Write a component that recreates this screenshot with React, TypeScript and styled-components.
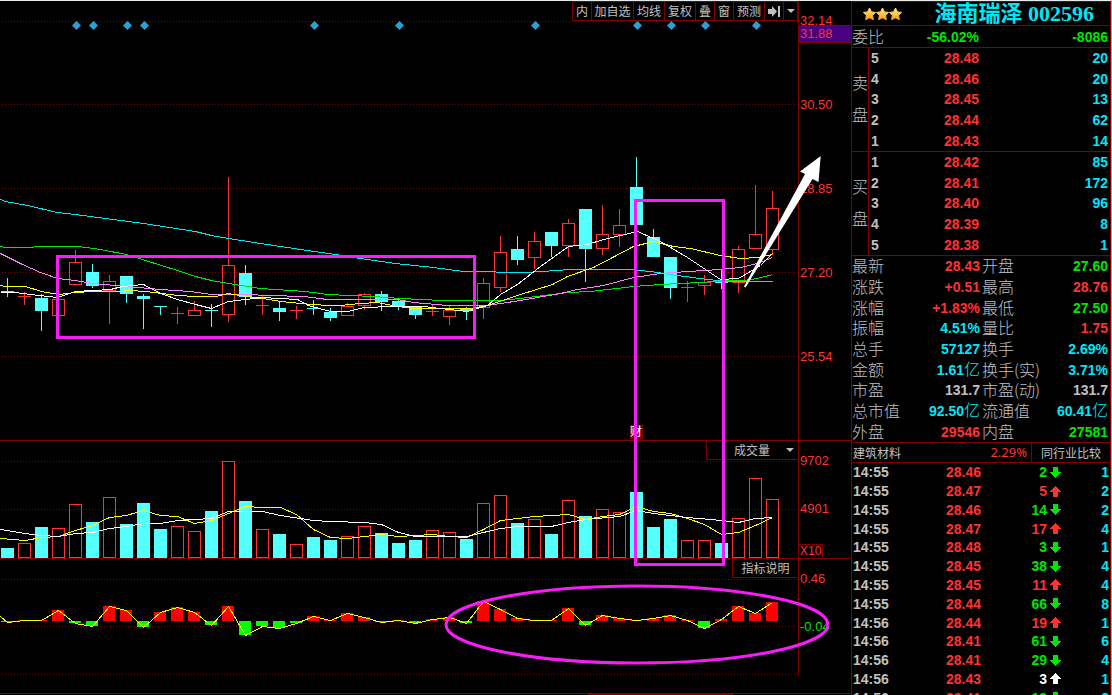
import React from "react";
import styled, { createGlobalStyle } from "styled-components";

const C = {
  line: "#800000",
  red: "#ff3232",
  up: "#ff0000",
  cyan: "#54ffff",
  aqua: "#00e6f8",
  green: "#00e600",
  text: "#c0c0c0",
  white: "#ffffff",
  yellow: "#ffff00",
  pink: "#ff80ff",
  mark: "#f81cf8",
};

const CJK = `"Noto Sans CJK SC", sans-serif`;

const GlobalStyle = createGlobalStyle`
  * { box-sizing: border-box; }
  body { margin: 0; background: #000; color: ${C.text}; font-family: "Liberation Sans", ${CJK}; }
  table { border-collapse: collapse; border-spacing: 0; }
  ul, dl, dd, h1, p { margin: 0; padding: 0; list-style: none; }
  th, td { padding: 0; font-weight: inherit; }
`;

const Page = styled.div`
  display: flex;
  height: 100vh;
  overflow: hidden;
  background: #000;
  border-top: 1px solid #e6eaea;
  border-right: 1px solid #a8a09c;
`;

/* ---------- chart side ---------- */

const Charts = styled.main`
  position: relative;
  flex: 1;
  min-width: 0;
`;

const Panel = styled.section`
  display: grid;
  grid-template-columns: minmax(0, 1fr) 53px;
  border-bottom: 1px solid ${C.line};
`;

const PlotColumn = styled.div`
  display: flex;
  flex-direction: column;
  align-items: flex-end;
  min-width: 0;
`;

const Plot = styled.svg<{ $h: number }>`
  display: block;
  width: 100%;
  height: ${(p) => p.$h}px;
`;

const Toolbar = styled.nav`
  display: flex;
  height: 20px;
  border-right: 1px solid ${C.line};
`;

const ToolButton = styled.button<{ $w: number }>`
  display: flex;
  align-items: center;
  justify-content: center;
  width: ${(p) => p.$w}px;
  padding: 0;
  border: 1px solid ${C.line};
  border-right: 0;
  background: #000;
  color: ${C.text};
  font: 12px/16px ${CJK};
  white-space: nowrap;
`;

const PickerBox = styled.div`
  display: flex;
  align-items: center;
  width: 92px;
  height: 19px;
  padding-right: 4px;
  border: solid ${C.line};
  border-width: 0 0 1px 1px;
`;

const Picker = styled.select`
  flex: 1;
  min-width: 0;
  padding: 0 0 0 27px;
  border: 0;
  appearance: none;
  background: transparent;
  color: ${C.text};
  font: 12px/18px ${CJK};
`;

const HelpButton = styled.button`
  width: 66px;
  height: 19px;
  padding: 0;
  border: solid ${C.line};
  border-width: 0 0 1px 1px;
  background: #000;
  color: ${C.text};
  font: 12px/18px ${CJK};
`;

const Axis = styled.div<{ $h?: number }>`
  position: relative;
  height: ${(p) => (p.$h ? `${p.$h}px` : "auto")};
  padding-top: 12px;
  border-left: 1px solid ${C.line};
  color: ${C.red};
  font-size: 13px;
  line-height: 16px;
`;

const AxisScale = styled.ul<{ $step: number }>`
  li {
    height: ${(p) => p.$step}px;
    padding-left: 1px;
  }
  li:last-child {
    height: 16px;
  }
`;

const Green = styled.span`
  color: ${C.green};
`;

const PriceFlag = styled.span`
  position: absolute;
  top: 24px;
  left: 0;
  right: 0;
  height: 18px;
  padding-left: 1px;
  border: solid ${C.line};
  border-width: 1px 0;
  background: #480080;
`;

const Unit = styled.span`
  position: absolute;
  left: 0;
  bottom: 0;
  padding: 0 1px;
  border: 1px solid ${C.line};
  border-left: 0;
  border-bottom: 0;
  line-height: 13px;
  font-size: 12px;
`;

const Marks = styled.svg`
  position: absolute;
  top: 0;
  left: 0;
  width: 100%;
  height: 694px;
  pointer-events: none;
`;

/* ---------- quote side ---------- */

const Side = styled.aside`
  display: flex;
  flex-direction: column;
  width: 260px;
  border: solid ${C.line};
  border-width: 1px 1px 0;
`;

const Title = styled.header`
  display: flex;
  align-items: center;
  height: 24px;
  padding-left: 11px;
  border-bottom: 1px solid ${C.line};
`;

const Name = styled.h1`
  flex: 1;
  padding-right: 16px;
  color: ${C.aqua};
  font: bold 22px/22px "Liberation Serif", ${CJK};
  text-align: right;
  white-space: nowrap;
`;

const Num = styled.span<{ $c: string }>`
  color: ${(p) => p.$c};
  font-weight: bold;
  font-size: 14px;
`;

const Yi = styled.span`
  font: 300 16px/16px ${CJK};
`;

const Ratio = styled.div`
  display: grid;
  grid-template-columns: 50px 77px 1fr;
  align-items: center;
  height: 22px;
  padding-right: 2px;
  border-bottom: 1px solid ${C.line};
  text-align: right;
`;

const Label = styled.span`
  color: ${C.text};
  font: 300 16px/18px ${CJK};
  padding-bottom: 2px;
  text-align: left;
  white-space: nowrap;
`;

const Book = styled.section`
  display: flex;
  height: 104px;
  border-bottom: 1px solid ${C.line};
`;

const BookSide = styled.div`
  display: flex;
  flex-direction: column;
  justify-content: center;
  gap: 16px;
  width: 17px;
  padding-bottom: 4px;
  border-right: 1px solid ${C.line};
  font: 300 16px/16px ${CJK};
`;

const BookTable = styled.table`
  flex: 1;
  height: 103px;
  table-layout: fixed;
  line-height: 16px;
  text-align: right;

  th {
    width: 20px;
    padding-left: 2px;
    text-align: left;
  }
  td:nth-child(2) {
    width: 90px;
  }
  td:last-child {
    padding-right: 2px;
  }
`;

const Info = styled.dl`
  display: grid;
  grid-template-columns: 130px 1fr;
  grid-template-rows: repeat(9, 1fr);
  height: 187px;
  border-bottom: 1px solid ${C.line};
`;

const InfoItem = styled.div`
  display: flex;
  align-items: center;
  justify-content: space-between;
  padding-right: 2px;
  line-height: 18px;

  dt {
    padding-bottom: 2px;
    font: 300 16px/18px ${CJK};
    white-space: nowrap;
  }
  dd {
    white-space: nowrap;
  }
`;

const Industry = styled.div`
  display: flex;
  align-items: stretch;
  height: 20px;
  border-bottom: 1px solid ${C.line};
  font: 12px/19px ${CJK};
`;

const IndustryName = styled.span`
  flex: 1;
  padding-left: 1px;
`;

const IndustryRate = styled.span`
  padding-right: 4px;
  color: ${C.red};
  font: 13px/19px "Noto Sans", sans-serif;
`;

const Compare = styled.button`
  width: 79px;
  padding: 0;
  border: 0;
  border-left: 1px solid ${C.line};
  background: #000;
  color: ${C.text};
  font: 12px/19px ${CJK};
`;

const TickScroll = styled.div`
  flex: 1;
  min-height: 0;
  overflow: hidden;
`;

const TickTable = styled.table`
  width: 100%;
  height: 244px;
  table-layout: fixed;
  line-height: 16px;
  text-align: right;

  td:nth-child(1) {
    width: 52px;
    padding-left: 1px;
    text-align: left;
  }
  td:nth-child(2) {
    width: 77px;
  }
  td:nth-child(3) {
    width: 66px;
  }
  td:nth-child(4) {
    width: 18px;
    padding-left: 3px;
  }
  td:last-child {
    padding-right: 1px;
  }
`;

const ArrowIcon = styled.svg`
  display: block;
`;

/* ---------- data ---------- */

type Dir = "u" | "d";
// direction, high, low, body top, body bottom
const candles: [Dir, number, number, number, number][] = [
  ["d", 278, 297, 291, 292], ["u", 292, 305, 296, 297], ["d", 294, 331, 298, 311],
  ["u", 299, 316, 299, 316], ["u", 250, 285, 262, 285], ["d", 264, 288, 272, 286],
  ["u", 275, 324, 281, 291], ["d", 276, 303, 276, 294], ["d", 294, 329, 296, 299],
  ["d", 306, 315, 306, 307], ["u", 307, 324, 313, 314], ["u", 301, 316, 310, 316],
  ["d", 304, 327, 310, 311], ["u", 177, 322, 265, 315], ["d", 265, 305, 273, 297],
  ["u", 295, 315, 305, 306], ["d", 301, 321, 308, 312], ["u", 306, 319, 310, 311],
  ["d", 300, 315, 308, 309], ["d", 308, 321, 312, 318], ["u", 303, 316, 306, 316],
  ["u", 293, 310, 294, 306], ["d", 291, 311, 294, 302], ["d", 299, 310, 301, 307],
  ["d", 307, 319, 307, 315], ["u", 304, 316, 311, 312], ["u", 306, 325, 310, 317],
  ["d", 307, 320, 308, 311], ["u", 278, 319, 283, 308], ["u", 236, 292, 252, 288],
  ["d", 236, 265, 249, 260], ["u", 232, 269, 241, 258], ["d", 232, 257, 232, 246],
  ["u", 219, 257, 223, 246], ["d", 209, 282, 209, 249], ["u", 205, 255, 234, 249],
  ["u", 209, 247, 225, 235], ["d", 157, 225, 187, 225], ["d", 229, 257, 237, 257],
  ["d", 257, 299, 257, 288], ["u", 281, 302, 287, 288], ["u", 275, 295, 282, 286],
  ["d", 270, 289, 281, 283], ["u", 246, 293, 249, 283], ["u", 185, 249, 234, 249],
  ["u", 191, 255, 208, 250],
];

const volumes = [
  548, 543, 527, 528, 504, 522, 497, 524, 503, 529, 526, 531, 511, 461, 501, 529, 534, 544, 537, 540, 536, 526, 533,
  543, 540, 530, 532, 539, 503, 495, 523, 519, 534, 500, 516, 509, 512, 492, 527, 519, 540, 540, 543, 518, 478, 499,
];

const indicator = [
  622, 620, 620, 610, 623, 626, 606, 610, 627, 612, 607, 612, 625, 606, 635, 626, 628, 623, 616, 620, 613, 617, 622,
  620, 623, 619, 617, 623, 601, 609, 618, 620, 620, 608, 625, 615, 618, 620, 618, 615, 620, 628, 619, 606, 613, 602,
];

const averages: [string, string][] = [
  [C.aqua, "0,199 5,201 27,205 57,212 75,214 105,218 143,223 195,231 211,235 228,238 260,243 300,249 335,254 360,258 395,263 433,267 463,271 490,271 500,272 525,272 541,271 570,269 628,269 650,271 677,275 707,279 727,281 772,281"],
  [C.green, "0,246 5,247 32,247 35,246 78,246 100,249 126,254 145,260 177,270 195,276 211,280 228,283 260,288 305,291 327,294 373,296 400,298 442,300 500,300 520,298 567,292 590,291 633,286 660,284 700,282 727,280 743,280 757,278 772,274"],
  [C.pink, "0,253 22,264 40,272 57,278 75,280 92,283 126,286 160,289 190,291 211,294 245,294 270,295 303,296 327,299 397,299 413,302 447,305 487,305 520,300 560,293 577,289 603,285 633,277 660,273 687,271 720,269 740,267 757,263 772,257"],
  [C.yellow, "0,285 5,286 25,286 41,291 58,294 75,292 92,291 115,291 130,290 145,291 177,295 195,296 215,296 228,293 245,296 262,298 280,301 300,303 327,305 340,305 360,303 377,302 397,306 413,308 470,308 487,305 520,294 552,284 567,276 593,267 633,246 653,241 673,246 690,248 720,255 740,258 757,257 772,254"],
  [C.white, "0,292 15,292 30,294 57,297 75,291 110,289 122,286 143,284 160,293 177,299 195,304 211,308 228,301 245,299 262,297 297,299 308,305 330,311 348,311 363,307 393,306 423,306 440,308 467,311 487,305 500,294 517,284 540,266 568,246 587,244 603,239 637,231 660,241 687,257 720,279 738,278 760,265 772,253"],
];

const volumeAverages: [string, string][] = [
  [C.yellow, "0,538 25,540 41,537 58,536 75,530 92,525 109,517 126,515 143,510 160,515 177,516 194,523 211,520 228,513 245,506 262,507 280,507 296,514 313,529 330,537 347,538 364,536 381,534 398,536 415,535 432,534 449,536 466,537 483,529 500,520 517,518 534,516 551,515 568,514 585,519 602,516 619,514 636,506 653,511 670,513 687,518 704,524 721,534 738,532 755,525 772,517"],
  [C.white, "0,529 24,533 41,535 58,536 75,533 92,532 109,528 126,526 143,523 160,523 177,520 194,519 211,518 228,511 262,511 280,515 313,520 330,521 364,522 381,524 398,532 415,536 466,536 483,532 500,528 517,526 551,526 568,522 585,519 619,516 636,510 653,513 687,517 721,520 738,522 755,518 772,517"],
];

const diamonds = [76, 93, 127, 144, 314, 399, 535, 637, 671, 705, 756];

const sells = [["5", "28.48", "20"], ["4", "28.46", "20"], ["3", "28.45", "13"], ["2", "28.44", "62"], ["1", "28.43", "14"]];
const buys = [["1", "28.42", "85"], ["2", "28.41", "172"], ["3", "28.40", "96"], ["4", "28.39", "8"], ["5", "28.38", "1"]];

// label, value, colour, unit
const info: [string, string, string, string?][] = [
  ["最新", "28.43", C.red], ["开盘", "27.60", C.green],
  ["涨跌", "+0.51", C.red], ["最高", "28.76", C.red],
  ["涨幅", "+1.83%", C.red], ["最低", "27.50", C.green],
  ["振幅", "4.51%", C.aqua], ["量比", "1.75", C.red],
  ["总手", "57127", C.aqua], ["换手", "2.69%", C.aqua],
  ["金额", "1.61", C.aqua, "亿"], ["换手(实)", "3.71%", C.aqua],
  ["市盈", "131.7", C.text], ["市盈(动)", "131.7", C.text],
  ["总市值", "92.50", C.aqua, "亿"], ["流通值", "60.41", C.aqua, "亿"],
  ["外盘", "29546", C.red], ["内盘", "27581", C.green],
];

// time, price, volume, direction, colour, count
const ticks: [string, string, string, Dir, string, string][] = [
  ["14:55", "28.46", "2", "d", C.green, "1"],
  ["14:55", "28.47", "5", "u", C.red, "2"],
  ["14:55", "28.46", "14", "d", C.green, "2"],
  ["14:55", "28.47", "17", "u", C.red, "4"],
  ["14:55", "28.48", "3", "d", C.green, "1"],
  ["14:55", "28.45", "38", "d", C.green, "4"],
  ["14:55", "28.45", "11", "u", C.red, "4"],
  ["14:55", "28.44", "66", "d", C.green, "8"],
  ["14:56", "28.44", "19", "u", C.red, "1"],
  ["14:56", "28.41", "61", "d", C.green, "6"],
  ["14:56", "28.41", "29", "d", C.green, "4"],
  ["14:56", "28.43", "3", "u", C.white, "1"],
  ["14:56", "28.41", "13", "d", C.green, "2"],
];

const tools: [string, number][] = [
  ["内", 19], ["加自选", 42], ["均线", 31], ["复权", 31], ["叠", 19], ["窗", 19], ["预测", 31],
];

/* ---------- drawings ---------- */

const center = (i: number) => 7 + i * 17;

const Grid = ({ ys }: { ys: number[] }) => (
  <g stroke={C.line} strokeDasharray="1 2">
    {ys.map((y) => (
      <line key={y} x1="2" x2="798" y1={y + 0.5} y2={y + 0.5} />
    ))}
  </g>
);

const Lines = ({ data }: { data: [string, string][] }) => (
  <g fill="none">
    {data.map(([color, points]) => (
      <polyline key={color} points={points} stroke={color} transform="translate(0.5 0.5)" />
    ))}
  </g>
);

const Bar = ({ i, dir, top, bottom }: { i: number; dir: Dir; top: number; bottom: number }) => {
  const x = center(i) - 6;
  const h = bottom - top;
  if (dir === "d" || h < 2) {
    return <rect x={x} y={top} width="13" height={h} fill={dir === "d" ? C.cyan : C.red} />;
  }
  return <rect x={x + 0.5} y={top + 0.5} width="12" height={h - 1} fill="none" stroke={C.red} />;
};

const Candle = ({ i }: { i: number }) => {
  const [dir, high, low, top, bottom] = candles[i];
  const x = center(i);
  const color = dir === "d" ? C.cyan : C.red;
  return (
    <g>
      <rect x={x} y={high} width="1" height={top - high} fill={color} />
      <rect x={x} y={bottom} width="1" height={low - bottom} fill={color} />
      <Bar i={i} dir={dir} top={top} bottom={bottom} />
    </g>
  );
};

const Caret = () => (
  <svg width="8" height="4" viewBox="0 0 8 4" aria-hidden="true">
    <path d="M0 0h8L4 4z" fill={C.text} />
  </svg>
);

const Star = () => (
  <svg width="13" height="14" viewBox="0 0 13 14" aria-hidden="true">
    <defs>
      <linearGradient id="gold" x1="0" y1="0" x2="0" y2="1">
        <stop offset="0" stopColor="#ffe890" />
        <stop offset="0.5" stopColor="#ffc848" />
        <stop offset="1" stopColor="#f09a20" />
      </linearGradient>
    </defs>
    <path
      d="M6.5 1l1.900 3.900 4.100.5-2.900 3 .8 4.300-3.900-1.900-3.900 1.900.8-4.300-2.900-3 4.100-.5z"
      fill="url(#gold)"
      stroke="url(#gold)"
      strokeLinejoin="round"
    />
  </svg>
);

const TickArrow = ({ dir, color }: { dir: Dir; color: string }) => (
  <ArrowIcon width="11" height="11" viewBox="0 0 11 11" shapeRendering="crispEdges" aria-hidden="true">
    <path d={dir === "d" ? "M3 0h5v5h3L5.5 11 0 5h3z" : "M3 11h5V6h3L5.5 0 0 6h3z"} fill={color} />
  </ArrowIcon>
);

const BookHalf = ({ side, rows }: { side: string; rows: string[][] }) => (
  <Book>
    <BookSide>
      <span>{side}</span>
      <span>盘</span>
    </BookSide>
    <BookTable>
      <tbody>
        {rows.map(([rank, price, qty]) => (
          <tr key={rank}>
            <th scope="row"><Num $c={C.text}>{rank}</Num></th>
            <td><Num $c={C.red}>{price}</Num></td>
            <td><Num $c={C.aqua}>{qty}</Num></td>
          </tr>
        ))}
      </tbody>
    </BookTable>
  </Book>
);

export default function App() {
  return (
    <>
      <GlobalStyle />
      <Page>
        <Charts>
          <Panel>
            <PlotColumn>
              <Toolbar>
                {tools.map(([label, w]) => (
                  <ToolButton key={label} $w={w}>{label}</ToolButton>
                ))}
                <ToolButton $w={19} aria-label="最新行情">
                  <svg width="12" height="11" viewBox="0 0 12 11" aria-hidden="true">
                    <path d="M0 3h4V0l5 5.5L4 11V8H0zM10 0h2v11h-2z" fill={C.text} />
                  </svg>
                </ToolButton>
                <ToolButton $w={14} aria-label="更多"><Caret /></ToolButton>
              </Toolbar>
              <Plot $h={419} viewBox="0 21 798 419" preserveAspectRatio="none" shapeRendering="crispEdges">
                <Grid ys={[21, 104, 188, 272, 356]} />
                {diamonds.map((x) => (
                  <path key={x} d={`M${x + 0.5} 21l4.5 4.5-4.5 4.5-4.5-4.5z`} fill="#2d9fd0" shapeRendering="auto" />
                ))}
                {candles.map((_, i) => <Candle key={i} i={i} />)}
                <Lines data={averages} />
                <rect x="630" y="425" width="13" height="14" fill={C.line} />
                <text x="630" y="436" fill={C.white} fontSize="12" fontFamily='"Noto Sans CJK SC", sans-serif'>财</text>
              </Plot>
            </PlotColumn>
            <Axis>
              <AxisScale $step={84}>
                <li>32.14</li>
                <li>30.50</li>
                <li>28.85</li>
                <li>27.20</li>
                <li>25.54</li>
              </AxisScale>
              <PriceFlag>31.88</PriceFlag>
            </Axis>
          </Panel>

          <Panel>
            <PlotColumn>
              <PickerBox>
                <Picker aria-label="指标" defaultValue="vol">
                  <option value="vol">成交量</option>
                </Picker>
                <Caret />
              </PickerBox>
              <Plot $h={98} viewBox="0 460 798 98" preserveAspectRatio="none" shapeRendering="crispEdges">
                <Grid ys={[461, 509]} />
                {volumes.map((top, i) => (
                  <Bar key={i} i={i} dir={candles[i][0]} top={top} bottom={558} />
                ))}
                <Lines data={volumeAverages} />
              </Plot>
            </PlotColumn>
            <Axis>
              <AxisScale $step={48}>
                <li>9702</li>
                <li>4901</li>
              </AxisScale>
              <Unit>X10</Unit>
            </Axis>
          </Panel>

          <Panel>
            <PlotColumn>
              <HelpButton>指标说明</HelpButton>
              <Plot $h={115} viewBox="0 578 798 115" preserveAspectRatio="none" shapeRendering="crispEdges">
                <Grid ys={[579, 626, 674]} />
                {indicator.map((y, i) => (
                  <rect
                    key={i}
                    x={center(i) - 6}
                    y={Math.min(y, 621)}
                    width="12"
                    height={Math.abs(y - 621)}
                    fill={y < 621 ? C.up : "#00ff00"}
                  />
                ))}
                <Lines data={[[C.yellow, "0,616 " + indicator.map((y, i) => `${center(i)},${y}`).join(" ")]]} />
              </Plot>
            </PlotColumn>
            <Axis $h={116}>
              <AxisScale $step={48}>
                <li>0.46</li>
                <li><Green>-0.04</Green></li>
              </AxisScale>
            </Axis>
          </Panel>

          <Marks viewBox="0 1 851 694" preserveAspectRatio="none" aria-hidden="true">
            <g fill="none" stroke={C.mark} strokeWidth="3">
              <rect x="57.5" y="256.5" width="417" height="81" />
              <rect x="635.5" y="200.5" width="88" height="364" />
              <ellipse cx="637" cy="624.5" rx="191" ry="38.5" />
            </g>
            <path d="M820.7 156L800 171.5l5 2.5-61 112.5 1.500 1L812.500 179l6 3z" fill={C.white} />
            <rect x="588" y="694" width="145" height="1" fill={C.line} />
          </Marks>
        </Charts>

        <Side>
          <Title>
            <Star />
            <Star />
            <Star />
            <Name>海南瑞泽 002596</Name>
          </Title>
          <Ratio>
            <Label>委比</Label>
            <Num $c={C.green}>-56.02%</Num>
            <Num $c={C.green}>-8086</Num>
          </Ratio>
          <BookHalf side="卖" rows={sells} />
          <BookHalf side="买" rows={buys} />
          <Info>
            {info.map(([label, value, color, unit]) => (
              <InfoItem key={label}>
                <dt>{label}</dt>
                <dd>
                  <Num $c={color}>
                    {value}
                    {unit && <Yi>{unit}</Yi>}
                  </Num>
                </dd>
              </InfoItem>
            ))}
          </Info>
          <Industry>
            <IndustryName>建筑材料</IndustryName>
            <IndustryRate>2.29%</IndustryRate>
            <Compare>同行业比较</Compare>
          </Industry>
          <TickScroll>
            <TickTable>
              <tbody>
                {ticks.map(([time, price, vol, dir, color, count], i) => (
                  <tr key={i}>
                    <td><Num $c={C.text}>{time}</Num></td>
                    <td><Num $c={C.red}>{price}</Num></td>
                    <td><Num $c={color}>{vol}</Num></td>
                    <td><TickArrow dir={dir} color={color} /></td>
                    <td><Num $c={C.aqua}>{count}</Num></td>
                  </tr>
                ))}
              </tbody>
            </TickTable>
          </TickScroll>
        </Side>
      </Page>
    </>
  );
}
